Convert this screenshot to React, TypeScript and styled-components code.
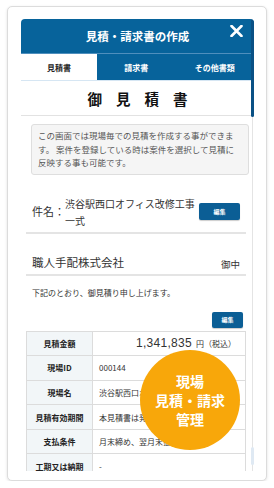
import React from 'react';
import styled, { createGlobalStyle } from 'styled-components';

const GlobalStyle = createGlobalStyle`
  html, body {
    margin: 0;
    padding: 0;
    background: #fff;
  }
  body {
    font-family: "Noto Sans CJK JP", "Noto Sans", sans-serif;
    color: #333;
  }
`;

const BLUE = '#07639b';

const Card = styled.div`
  position: relative;
  box-sizing: border-box;
  width: 260px;
  height: 475px;
  margin: 6px 0 0 7px;
  padding: 12px 12px 9px 13px;
  border: 1px solid #dcdcdc;
  border-radius: 5px;
  box-shadow: 0 1px 3px rgba(0, 0, 0, 0.12);
  background: #fff;
`;

const Panel = styled.div`
  position: relative;
  height: 100%;
  display: flex;
  flex-direction: column;
  overflow: hidden;
  border-radius: 4px 4px 0 0;
`;

const ScrollThumb = styled.div<{ $top: number; $height: number; $color: string }>`
  position: absolute;
  right: 0;
  top: ${(p) => p.$top}px;
  width: 3px;
  height: ${(p) => p.$height}px;
  border-radius: 2px;
  background: ${(p) => p.$color};
`;

const Header = styled.div`
  position: relative;
  flex: none;
  height: 34px;
  display: flex;
  align-items: center;
  justify-content: center;
  background: ${BLUE};
  border-bottom: 1px solid #4f8fbd;
  color: #fff;
  font-size: 11.5px;
  font-weight: 700;
`;

const Close = styled.svg`
  position: absolute;
  right: 11px;
  top: 6px;
`;

const Tabs = styled.div`
  flex: none;
  display: flex;
  height: 26px;
  background: ${BLUE};
  border-bottom: 1px solid #d6e6f3;
`;

const Tab = styled.div<{ $active?: boolean }>`
  flex: ${(p) => (p.$active ? '0 0 76px' : '1')};
  display: flex;
  align-items: center;
  justify-content: center;
  background: ${(p) => (p.$active ? '#fff' : BLUE)};
  color: ${(p) => (p.$active ? '#222' : '#fff')};
  font-size: 8px;
  font-weight: 700;
`;

const DocTitle = styled.div`
  flex: none;
  height: 34px;
  display: flex;
  align-items: center;
  justify-content: center;
  padding-left: 14px;
  border-bottom: 1px solid #e2e2e2;
  font-size: 14.5px;
  font-weight: 700;
  letter-spacing: 14px;
  color: #111;
`;

const Body = styled.div`
  flex: 1;
  min-height: 0;
  margin-right: 1px;
  padding: 0 6px 0 5px;
  border-right: 1px solid #e4e4e4;
  overflow: hidden;
`;

const Notice = styled.div`
  margin: 8px -3px 0 5px;
  padding: 4px 9px 4px 6px;
  background: #f5f5f5;
  border: 1px solid #dedede;
  border-radius: 3px;
  font-size: 8.5px;
  line-height: 13.5px;
  color: #555;
`;

const Row = styled.div<{ $align: string; $pt: number }>`
  display: flex;
  align-items: ${(p) => p.$align};
  padding: ${(p) => p.$pt}px 6px 3px 6px;
  border-bottom: 2px solid #e4e4e4;
`;

const Label = styled.span`
  flex: none;
  white-space: nowrap;
  font-size: 11px;
  line-height: 17px;
  color: #333;
`;

const SubjectText = styled.span`
  width: 134px;
  font-size: 10px;
  line-height: 17px;
  color: #333;
`;

const Company = styled.span`
  flex: 1;
  font-size: 11.5px;
  line-height: 17px;
  color: #333;
`;

const Honorific = styled.span`
  font-size: 9.5px;
  line-height: 14px;
  color: #333;
`;

const EditButton = styled.div<{ $w: number; $h: number }>`
  flex: none;
  width: ${(p) => p.$w}px;
  height: ${(p) => p.$h}px;
  margin-left: auto;
  display: flex;
  align-items: center;
  justify-content: center;
  background: #0b5e95;
  border-radius: 2px;
  box-shadow: 0 1px 1px rgba(0, 0, 0, 0.2);
  color: #fff;
  font-size: 6px;
  font-weight: 700;
`;

const Lead = styled.div`
  margin-top: 10px;
  padding-left: 6px;
  font-size: 8px;
  line-height: 13px;
  color: #333;
`;

const ButtonRow = styled.div`
  display: flex;
  justify-content: flex-end;
  padding-right: 3px;
  margin-top: 13px;
`;

const Table = styled.div`
  margin-top: 3px;
  display: grid;
  grid-template-columns: 66px 1fr;
  border-top: 1px solid #dcdcdc;
  border-left: 1px solid #dcdcdc;
`;

const Th = styled.div`
  height: 23.6px;
  display: flex;
  align-items: center;
  justify-content: center;
  background: #f2f6f8;
  border-right: 1px solid #dcdcdc;
  border-bottom: 1px solid #dcdcdc;
  font-size: 8px;
  font-weight: 700;
  color: #222;
  white-space: nowrap;
`;

const Td = styled.div<{ $right?: boolean }>`
  height: 23.6px;
  display: flex;
  align-items: center;
  justify-content: ${(p) => (p.$right ? 'flex-end' : 'flex-start')};
  padding: 0 9px 0 6px;
  border-right: 1px solid #dcdcdc;
  border-bottom: 1px solid #dcdcdc;
  font-size: 8px;
  color: #333;
  white-space: nowrap;
  overflow: hidden;
`;

const Amount = styled.span`
  font-family: "Liberation Sans", Arial, sans-serif;
  font-size: 12px;
  letter-spacing: 0.3px;
  margin-right: 4px;
`;

const Badge = styled.div`
  position: absolute;
  left: 132px;
  top: 343px;
  width: 100px;
  height: 100px;
  border-radius: 50%;
  background: #f8a70a;
  display: flex;
  flex-direction: column;
  align-items: center;
  justify-content: center;
  color: #fff;
  font-size: 14px;
  font-weight: 700;
`;

const BadgeLine = styled.span`
  display: block;
  height: 19px;
  line-height: 19px;
`;

const rows: [string, string][] = [
  ['現場ID', '000144'],
  ['現場名', '渋谷駅西口オフィス改修工事一式'],
  ['見積有効期間', '本見積書は発行日より30日間有効'],
  ['支払条件', '月末締め、翌月末払い'],
  ['工期又は納期', '-'],
];

export default function App() {
  return (
    <>
      <GlobalStyle />
      <Card>
        <Panel>
          <Header>
            見積・請求書の作成
            <Close width="13" height="12" viewBox="0 0 13 12">
              <path d="M1.5 1 L11.5 11 M11.5 1 L1.5 11" stroke="#fff" strokeWidth="2.6" strokeLinecap="round" />
            </Close>
          </Header>
          <Tabs>
            <Tab $active>見積書</Tab>
            <Tab>請求書</Tab>
            <Tab>その他書類</Tab>
          </Tabs>
          <DocTitle>御見積書</DocTitle>
          <Body>
            <Notice>
              この画面では現場毎での見積を作成する事ができます。 案件を登録している時は案件を選択して見積に反映する事も可能です。
            </Notice>
            <div style={{ marginTop: 20 }}>
              <Row $align="center" $pt={0}>
                <Label>件名：</Label>
                <SubjectText>渋谷駅西口オフィス改修工事一式</SubjectText>
                <EditButton $w={41} $h={17}>編集</EditButton>
              </Row>
            </div>
            <Row $align="flex-end" $pt={20}>
              <Company>職人手配株式会社</Company>
              <Honorific>御中</Honorific>
            </Row>
            <Lead>下記のとおり、御見積り申し上げます。</Lead>
            <ButtonRow>
              <EditButton $w={31} $h={16}>編集</EditButton>
            </ButtonRow>
            <Table>
              <Th>見積金額</Th>
              <Td $right>
                <Amount>1,341,835</Amount>円（税込）
              </Td>
              {rows.map(([k, v]) => (
                <React.Fragment key={k}>
                  <Th>{k}</Th>
                  <Td>{v}</Td>
                </React.Fragment>
              ))}
            </Table>
          </Body>
          <ScrollThumb $top={0} $height={98} $color="#0a5185" />
          <ScrollThumb $top={428} $height={18} $color="#dfe9f3" />
        </Panel>
        <Badge>
          <BadgeLine>現場</BadgeLine>
          <BadgeLine>見積・請求</BadgeLine>
          <BadgeLine>管理</BadgeLine>
        </Badge>
      </Card>
    </>
  );
}
